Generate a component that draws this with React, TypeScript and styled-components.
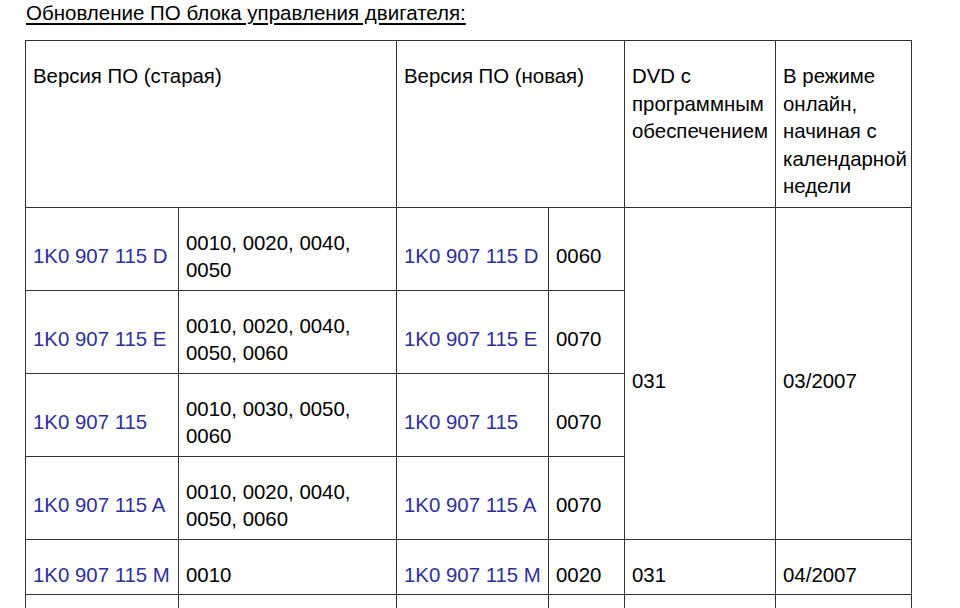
import React from "react";
import styled, { createGlobalStyle } from "styled-components";

const Global = createGlobalStyle`
  html, body { margin: 0; padding: 0; background: #fff; }
  body { font-family: "Liberation Sans", Arial, sans-serif; color: #000; }
`;

const Page = styled.div`
  padding: 0 0 0 25px;
  width: 935px;
  height: 608px;
  overflow: hidden;
`;

const Title = styled.div`
  font-size: 20.5px;
  line-height: 26px;
  text-decoration: underline;
  text-underline-offset: 3px;
  padding-left: 1px;
  margin-bottom: 14px;
`;

const Table = styled.table`
  border-collapse: collapse;
  table-layout: fixed;
  width: 886px;
  font-size: 20.4px;
  line-height: 27.5px;
`;

const Col = styled.col<{ $w: number }>`
  width: ${(p) => p.$w}px;
`;

const HeadCell = styled.th`
  border: 1px solid #333;
  padding: 22px 7px 6px;
  text-align: left;
  vertical-align: top;
  font-weight: normal;
  height: 137px;
`;

const Cell = styled.td<{ $blue?: boolean }>`
  border: 1px solid #333;
  padding: 22px 7px 5px;
  vertical-align: middle;
  color: ${(p) => (p.$blue ? "#2f2f9c" : "#000")};
  white-space: ${(p) => (p.$blue ? "nowrap" : "normal")};
`;

const EmptyRow = styled.tr`
  height: 40px;
`;

type Row = { oldPn: string; oldVer: string; newPn: string; newVer: string };

const rows: Row[] = [
  { oldPn: "1K0 907 115 D", oldVer: "0010, 0020, 0040, 0050", newPn: "1K0 907 115 D", newVer: "0060" },
  { oldPn: "1K0 907 115 E", oldVer: "0010, 0020, 0040, 0050, 0060", newPn: "1K0 907 115 E", newVer: "0070" },
  { oldPn: "1K0 907 115", oldVer: "0010, 0030, 0050, 0060", newPn: "1K0 907 115", newVer: "0070" },
  { oldPn: "1K0 907 115 A", oldVer: "0010, 0020, 0040, 0050, 0060", newPn: "1K0 907 115 A", newVer: "0070" },
];

export default function App() {
  return (
    <Page>
      <Global />
      <Title>Обновление ПО блока управления двигателя:</Title>
      <Table>
        <colgroup>
          <Col $w={153} />
          <Col $w={218} />
          <Col $w={152} />
          <Col $w={76} />
          <Col $w={151} />
          <Col $w={136} />
        </colgroup>
        <thead>
          <tr>
            <HeadCell colSpan={2}>Версия ПО (старая)</HeadCell>
            <HeadCell colSpan={2}>Версия ПО (новая)</HeadCell>
            <HeadCell>DVD с программным обеспечением</HeadCell>
            <HeadCell>В режиме онлайн, начиная с календарной недели</HeadCell>
          </tr>
        </thead>
        <tbody>
          {rows.map((r, i) => (
            <tr key={i}>
              <Cell $blue>{r.oldPn}</Cell>
              <Cell>{r.oldVer}</Cell>
              <Cell $blue>{r.newPn}</Cell>
              <Cell>{r.newVer}</Cell>
              {i === 0 && (
                <>
                  <Cell rowSpan={4}>031</Cell>
                  <Cell rowSpan={4}>03/2007</Cell>
                </>
              )}
            </tr>
          ))}
          <tr>
            <Cell $blue>1K0 907 115 M</Cell>
            <Cell>0010</Cell>
            <Cell $blue>1K0 907 115 M</Cell>
            <Cell>0020</Cell>
            <Cell>031</Cell>
            <Cell>04/2007</Cell>
          </tr>
          <EmptyRow>
            <Cell />
            <Cell />
            <Cell />
            <Cell />
            <Cell />
            <Cell />
          </EmptyRow>
        </tbody>
      </Table>
    </Page>
  );
}
